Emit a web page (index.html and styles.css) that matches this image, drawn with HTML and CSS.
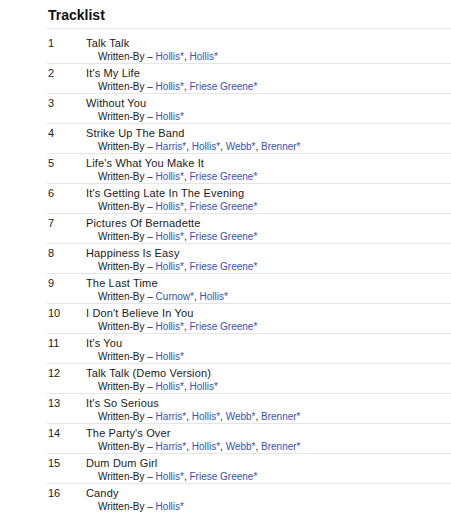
FILE: index.html
```html
<!DOCTYPE html>
<html lang="en">
<head>
<meta charset="utf-8">
<title>Tracklist</title>
<link rel="stylesheet" href="styles.css">
</head>
<body>
<section class="tracklist">
  <h2 class="tracklist-title">Tracklist</h2>
  <div class="tracks">
    <div class="track first"><span class="pos">1</span><div class="info"><div class="name">Talk Talk</div><div class="credits">Written-By – <a href="#">Hollis*</a>, <a href="#">Hollis*</a></div></div></div>
    <div class="track"><span class="pos">2</span><div class="info"><div class="name">It's My Life</div><div class="credits">Written-By – <a href="#">Hollis*</a>, <a href="#">Friese Greene*</a></div></div></div>
    <div class="track"><span class="pos">3</span><div class="info"><div class="name">Without You</div><div class="credits">Written-By – <a href="#">Hollis*</a></div></div></div>
    <div class="track"><span class="pos">4</span><div class="info"><div class="name">Strike Up The Band</div><div class="credits">Written-By – <a href="#">Harris*</a>, <a href="#">Hollis*</a>, <a href="#">Webb*</a>, <a href="#">Brenner*</a></div></div></div>
    <div class="track"><span class="pos">5</span><div class="info"><div class="name">Life's What You Make It</div><div class="credits">Written-By – <a href="#">Hollis*</a>, <a href="#">Friese Greene*</a></div></div></div>
    <div class="track"><span class="pos">6</span><div class="info"><div class="name">It's Getting Late In The Evening</div><div class="credits">Written-By – <a href="#">Hollis*</a>, <a href="#">Friese Greene*</a></div></div></div>
    <div class="track"><span class="pos">7</span><div class="info"><div class="name">Pictures Of Bernadette</div><div class="credits">Written-By – <a href="#">Hollis*</a>, <a href="#">Friese Greene*</a></div></div></div>
    <div class="track"><span class="pos">8</span><div class="info"><div class="name">Happiness Is Easy</div><div class="credits">Written-By – <a href="#">Hollis*</a>, <a href="#">Friese Greene*</a></div></div></div>
    <div class="track"><span class="pos">9</span><div class="info"><div class="name">The Last Time</div><div class="credits">Written-By – <a href="#">Curnow*</a>, <a href="#">Hollis*</a></div></div></div>
    <div class="track"><span class="pos">10</span><div class="info"><div class="name">I Don't Believe In You</div><div class="credits">Written-By – <a href="#">Hollis*</a>, <a href="#">Friese Greene*</a></div></div></div>
    <div class="track"><span class="pos">11</span><div class="info"><div class="name">It's You</div><div class="credits">Written-By – <a href="#">Hollis*</a></div></div></div>
    <div class="track"><span class="pos">12</span><div class="info"><div class="name">Talk Talk (Demo Version)</div><div class="credits">Written-By – <a href="#">Hollis*</a>, <a href="#">Hollis*</a></div></div></div>
    <div class="track"><span class="pos">13</span><div class="info"><div class="name">It's So Serious</div><div class="credits">Written-By – <a href="#">Harris*</a>, <a href="#">Hollis*</a>, <a href="#">Webb*</a>, <a href="#">Brenner*</a></div></div></div>
    <div class="track"><span class="pos">14</span><div class="info"><div class="name">The Party's Over</div><div class="credits">Written-By – <a href="#">Harris*</a>, <a href="#">Hollis*</a>, <a href="#">Webb*</a>, <a href="#">Brenner*</a></div></div></div>
    <div class="track"><span class="pos">15</span><div class="info"><div class="name">Dum Dum Girl</div><div class="credits">Written-By – <a href="#">Hollis*</a>, <a href="#">Friese Greene*</a></div></div></div>
    <div class="track"><span class="pos">16</span><div class="info"><div class="name">Candy</div><div class="credits">Written-By – <a href="#">Hollis*</a></div></div></div>
  </div>
</section>
</body>
</html>
```

FILE: styles.css
```css
html, body {
  margin: 0;
  padding: 0;
  background: #fff;
}

body {
  font-family: "Liberation Sans", Arial, sans-serif;
  color: #222;
}

.tracklist {
  margin-left: 47px;
  padding-top: 6px;
}

.tracklist-title {
  margin: 0;
  padding: 0 0 4px 1px;
  font-size: 14px;
  line-height: 18px;
  font-weight: bold;
  color: #111;
  border-bottom: 1px solid #e5e5e5;
}

.tracks {
  padding-top: 4px;
}

.track {
  display: grid;
  grid-template-columns: 38px 1fr;
  border-top: 1px solid #e5e5e5;
  padding-top: 2px;
  height: 27px;
}

.track.first {
  border-top-color: transparent;
}

.pos {
  font-size: 11px;
  line-height: 14px;
  padding-left: 1px;
  color: #1a1a1a;
}

.name {
  font-size: 11px;
  line-height: 14px;
  letter-spacing: 0.15px;
  padding-left: 1px;
  color: #1a1a1a;
}

.credits {
  font-size: 10px;
  line-height: 13px;
  padding-left: 13px;
  color: #1a1a1a;
}

.credits a {
  color: #3651b5;
  text-decoration: none;
}
```
